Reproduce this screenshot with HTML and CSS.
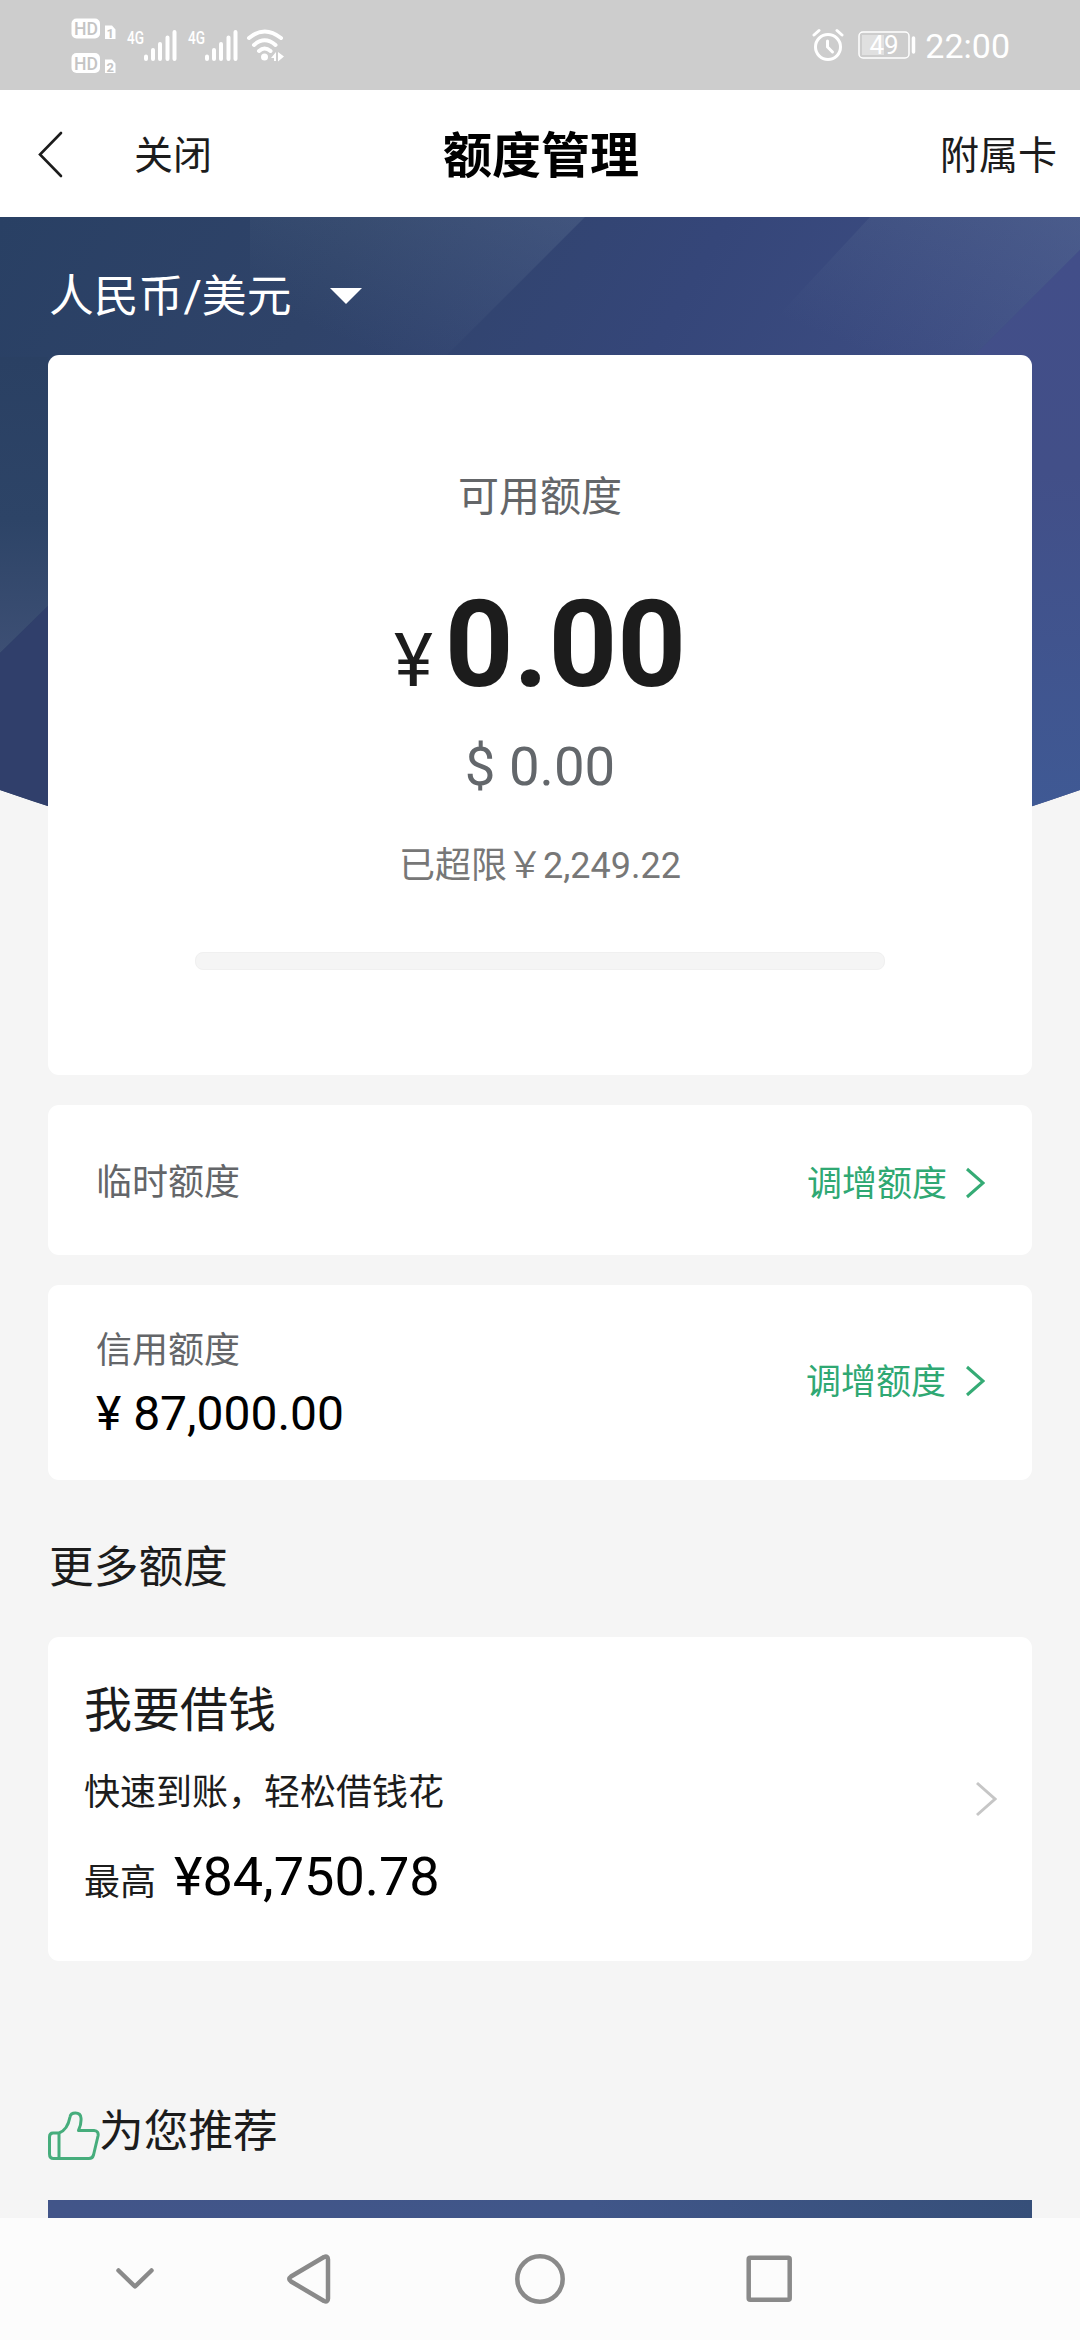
FILE: index.html
```html
<!DOCTYPE html>
<html lang="zh-CN">
<head>
<meta charset="utf-8">
<title>额度管理</title>
<link rel="stylesheet" href="styles.css">
</head>
<body>
<div class="screen">
  <header class="status">
    <svg class="status-left" width="220" height="90" viewBox="70 0 220 90">
      <g fill="#fff">
        <rect x="71.500" y="18.500" width="28.500" height="20" rx="5"/>
        <rect x="71.500" y="53" width="28.500" height="20" rx="5"/>
        <path d="M105 25.500h7l3.500 4v9.500H105zM105 59.500h7l3.500 4V73H105z"/>
      </g>
      <g class="hd">
        <text x="74" y="35.200" textLength="24" lengthAdjust="spacingAndGlyphs">HD</text>
        <text x="74" y="69.700" textLength="24" lengthAdjust="spacingAndGlyphs">HD</text>
        <text class="sim" x="106.500" y="37.500">1</text>
        <text class="sim" x="106.500" y="71.500">2</text>
      </g>
      <g class="gen">
        <text x="127" y="43.500" textLength="17" lengthAdjust="spacingAndGlyphs">4G</text>
        <text x="188" y="43.500" textLength="17" lengthAdjust="spacingAndGlyphs">4G</text>
      </g>
      <g fill="none" stroke="#fff" stroke-width="4" stroke-linecap="round">
        <path d="M146 56.500v2.500M153 50v9M160 44v15M167.500 37.500v21.500M174.500 32v27"/>
        <path d="M207 56.500v2.500M214 50v9M221 44v15M228.500 37.500v21.500M235.500 32v27"/>
        <path d="M249 38q15.500-13 32 0M254 45q10.500-9.500 21.500 0M259 51q5.500-5 11.500 0"/>
      </g>
      <circle cx="264.500" cy="57" r="3.500" fill="#fff"/>
      <path d="M271 58l5-6v9h-2v-3zM278 52l6 4.500-6 5z" fill="#fff"/>
    </svg>
    <div class="status-right">
      <svg width="32" height="34" viewBox="0 0 32 34" fill="none" stroke="#fff" stroke-linecap="round">
        <circle cx="16" cy="19" r="12.500" stroke-width="3"/>
        <path d="M15.500 13v6l5 5" stroke-width="3"/>
        <path d="M2 7l5-4.500M30 7l-5-4.500" stroke-width="3"/>
      </svg>
      <svg class="battery" width="58" height="28" viewBox="0 0 58 28">
        <rect x="1" y="1" width="50" height="26" rx="4" fill="none" stroke="#fff" stroke-width="1.500"/>
        <rect x="4" y="4" width="22" height="20" fill="#e0e0e0"/>
        <path d="M55.500 7v14" stroke="#fff" stroke-width="3.500" stroke-linecap="round"/>
        <text x="26" y="22.500" text-anchor="middle">49</text>
      </svg>
      <span class="clock">22:00</span>
    </div>
  </header>

  <nav class="topbar">
    <div class="topbar-left">
      <svg width="28" height="48" viewBox="0 0 28 48" fill="none" stroke="#1c1c1c" stroke-width="2.600" stroke-linecap="round"><path d="M24 3L3 24.500 24 46"/></svg>
      <span>关闭</span>
    </div>
    <h1>额度管理</h1>
    <span class="topbar-right">附属卡</span>
  </nav>

  <main class="content">
    <svg class="backdrop" width="1080" height="660" viewBox="0 0 1080 660">
      <defs>
        <linearGradient id="base" x1="0" y1="0" x2="1" y2=".35">
          <stop offset="0" stop-color="#294064"/><stop offset=".3" stop-color="#2f4369"/>
          <stop offset=".6" stop-color="#354679"/><stop offset="1" stop-color="#425189"/>
        </linearGradient>
        <linearGradient id="sheen" x1="0" y1="1" x2="1" y2="0">
          <stop offset=".2" stop-color="#6f86a0" stop-opacity="0"/><stop offset="1" stop-color="#6f86a0" stop-opacity=".24"/>
        </linearGradient>
        <linearGradient id="low" x1="0" y1="0" x2="0" y2="1">
          <stop offset="0" stop-color="#2a4063"/><stop offset=".55" stop-color="#2d4467"/>
          <stop offset="1" stop-color="#3d4f74"/>
        </linearGradient>
        <linearGradient id="edge" x1="0" y1="0" x2="0" y2="1">
          <stop offset="0" stop-color="#424e89"/><stop offset=".4" stop-color="#424f88"/><stop offset="1" stop-color="#3f5994"/>
        </linearGradient>
      </defs>
      <path d="M0 0H1080V573Q540 764 0 573z" fill="url(#base)"/>
      <path d="M250 0H585L445 140H250z" fill="url(#sheen)"/>
      <path d="M870 0H1080V33L973 140H740z" fill="url(#sheen)"/>
      <path d="M1080 33L973 140 1030 590 1080 573z" fill="url(#edge)"/>
      <path d="M0 140H48V389L0 436z" fill="url(#low)"/>
      <path d="M0 436L48 389V589L0 573z" fill="#303f6b"/>
    </svg>

    <div class="currency">
      <span>人民币/美元</span>
      <svg width="34" height="16" viewBox="0 0 34 16"><path d="M1 0H33L17 16z" fill="#fff"/></svg>
    </div>

    <section class="card summary">
      <div class="summary-label">可用额度</div>
      <div class="summary-main"><span class="sign">¥</span><strong>0.00</strong></div>
      <div class="summary-usd">$ 0.00</div>
      <div class="summary-over">已超限￥2,249.22</div>
      <div class="bar"></div>
    </section>

    <section class="card temp">
      <span class="label">临时额度</span>
      <div class="adjust"><span>调增额度</span>
        <svg width="20" height="32" viewBox="0 0 20 32"><path d="M2 2L18 16 2 30" fill="none" stroke="#35ab75" stroke-width="3"/></svg></div>
    </section>

    <section class="card credit">
      <div class="credit-info">
        <div class="label">信用额度</div>
        <div class="credit-sum">¥ 87,000.00</div>
      </div>
      <div class="adjust adjust-wide"><span>调增额度</span>
        <svg width="20" height="32" viewBox="0 0 20 32"><path d="M2 2L18 16 2 30" fill="none" stroke="#35ab75" stroke-width="3"/></svg></div>
    </section>

    <h2>更多额度</h2>

    <section class="card loan">
      <div>
        <div class="loan-title">我要借钱</div>
        <div class="loan-note">快速到账，轻松借钱花</div>
        <div class="loan-max"><span>最高</span><b>¥84,750.78</b></div>
      </div>
      <svg width="22" height="36" viewBox="0 0 22 36"><path d="M2 2L20 18 2 34" fill="none" stroke="#c6c6c6" stroke-width="3"/></svg>
    </section>

    <div class="recommend">
      <svg width="52" height="50" viewBox="0 0 52 50" fill="none" stroke="#46ad7c" stroke-width="3" stroke-linejoin="round">
        <path d="M11 22H5q-3.500 0-3.500 4V43q0 4.500 4 4.500H41q3.500 0 4.500-3.500L50 25q1-5-4-5.500H30.500Q33.500 13 33 7q-.5-5-5.500-5T22 6Q19.500 19 11 22zM11 22V47.500"/>
      </svg>
      <span>为您推荐</span>
    </div>
    <div class="banner"></div>
  </main>

  <footer class="sysnav">
    <svg width="1080" height="122" viewBox="0 2218 1080 122" fill="none" stroke="#8a8a8a" stroke-width="4.500" stroke-linecap="round" stroke-linejoin="round">
      <path d="M118.500 2270.500L135 2286.500 151.500 2270.500"/>
      <path d="M291 2276.500Q287.500 2279 291 2281.500L324 2301Q328 2302.500 328 2298.500V2259.500Q328 2255.500 324 2257z"/>
      <circle cx="540" cy="2279" r="22.700"/>
      <rect x="748.700" y="2257.700" width="41" height="42" rx="1.500"/>
    </svg>
  </footer>
</div>
</body>
</html>
```
FILE: styles.css
```css
* { box-sizing: border-box; margin: 0; padding: 0; }
body {
  width: 1080px;
  height: 2340px;
  overflow: hidden;
  background: #f5f5f5;
  color: #1c1c1c;
  font-family: Roboto, "Noto Sans CJK SC", sans-serif;
}
svg { display: block; flex: none; }
.screen { display: flex; flex-direction: column; height: 2340px; }

.status {
  display: flex;
  justify-content: space-between;
  height: 90px;
  padding: 0 70px 0 70px;
  background: #cdcdcd;
  color: #fff;
}
.hd { font-size: 18.500px; font-weight: 500; fill: #c4c4c4; }
.sim { font-size: 13px; font-weight: 700; }
.gen { font-size: 19px; font-weight: 500; fill: #fff; }
.status-right { display: flex; align-items: center; }
.battery { margin-left: 14px; margin-right: 9px; }
.battery text { font-size: 26px; fill: #fff; }
.clock { font-size: 34px; line-height: 40px; padding-top: 1px; }

.topbar {
  display: grid;
  grid-template-columns: 1fr auto 1fr;
  align-items: center;
  height: 127px;
  padding: 0 23px 0 37px;
  background: #fff;
  font-size: 39px;
}
.topbar-left { display: flex; align-items: center; gap: 69px; }
.topbar-left span, .topbar-right { padding-bottom: 4px; }
.topbar h1 { margin: 0 26px 0 14px; padding-bottom: 4px; font-size: 49px; font-weight: 700; color: #000; }
.topbar-right { justify-self: end; }

.content {
  position: relative;
  flex: 1;
  overflow: hidden;
  padding: 0 48px;
  background: #f5f5f5;
}
.backdrop { position: absolute; left: 0; top: 0; }
.currency {
  position: relative;
  display: flex;
  align-items: center;
  gap: 38px;
  height: 138px;
  padding: 20px 0 0 1px;
  color: #fff;
  font-size: 44.800px;
}
.currency span { padding-bottom: 7px; }
.card { position: relative; background: #fff; border-radius: 11px; }

.summary {
  display: flex;
  flex-direction: column;
  align-items: center;
  height: 720px;
  padding-top: 112px;
}
.summary-label { font-size: 41px; line-height: 60px; color: #646669; }
.summary-main { display: flex; align-items: baseline; gap: 12px; margin-top: 48px; line-height: 140px; }
.summary-main .sign { font-size: 74px; }
.summary-main strong { font-size: 120px; font-weight: 700; }
.summary-usd { margin-top: 3px; font-size: 54.500px; line-height: 64px; color: #63676b; }
.summary-over { margin-top: 43px; font-size: 36px; line-height: 50px; color: #777; }
.bar { width: 690px; height: 18px; margin-top: 61px; border-radius: 8px; background: #f5f5f5; border: 1px solid #f0f0f0; }

.temp, .credit { display: flex; align-items: center; justify-content: space-between; padding: 0 47px 0 48px; }
.temp { height: 150px; margin-top: 30px; padding-top: 6px; }
.credit { height: 195px; margin-top: 30px; }
.label { font-size: 36px; line-height: 54px; color: #646669; }
.credit-info { padding-top: 8px; }
.credit-sum { font-size: 48px; line-height: 72px; color: #000; }
.adjust { display: flex; align-items: center; gap: 18px; font-size: 35px; color: #2fa873; }
.adjust span { padding-bottom: 6px; }
.adjust-wide { gap: 19px; padding-bottom: 3px; }

h2 { margin: 55px 0 0 1px; font-size: 44.700px; line-height: 66px; font-weight: 400; }

.loan {
  display: flex;
  align-items: center;
  justify-content: space-between;
  height: 324px;
  margin-top: 36px;
  padding: 0 35px 0 36px;
}
.loan-title { font-size: 48px; line-height: 66px; }
.loan-note { margin-top: 22px; font-size: 36px; line-height: 54px; }
.loan-max { display: flex; align-items: baseline; gap: 18px; margin-top: 19px; font-size: 36px; line-height: 76px; }
.loan-max b { font-size: 54px; font-weight: 400; color: #000; }

.recommend { display: flex; align-items: center; height: 66px; margin-top: 137px; font-size: 44.700px; }
.recommend svg { margin-top: 10px; }
.recommend span { margin-left: -1px; padding-bottom: 7px; }
.banner { height: 60px; margin-top: 36px; background: linear-gradient(90deg, #425589, #405689 55%, #364f79); }

.sysnav { position: relative; height: 122px; background: #fcfcfc; }
```
